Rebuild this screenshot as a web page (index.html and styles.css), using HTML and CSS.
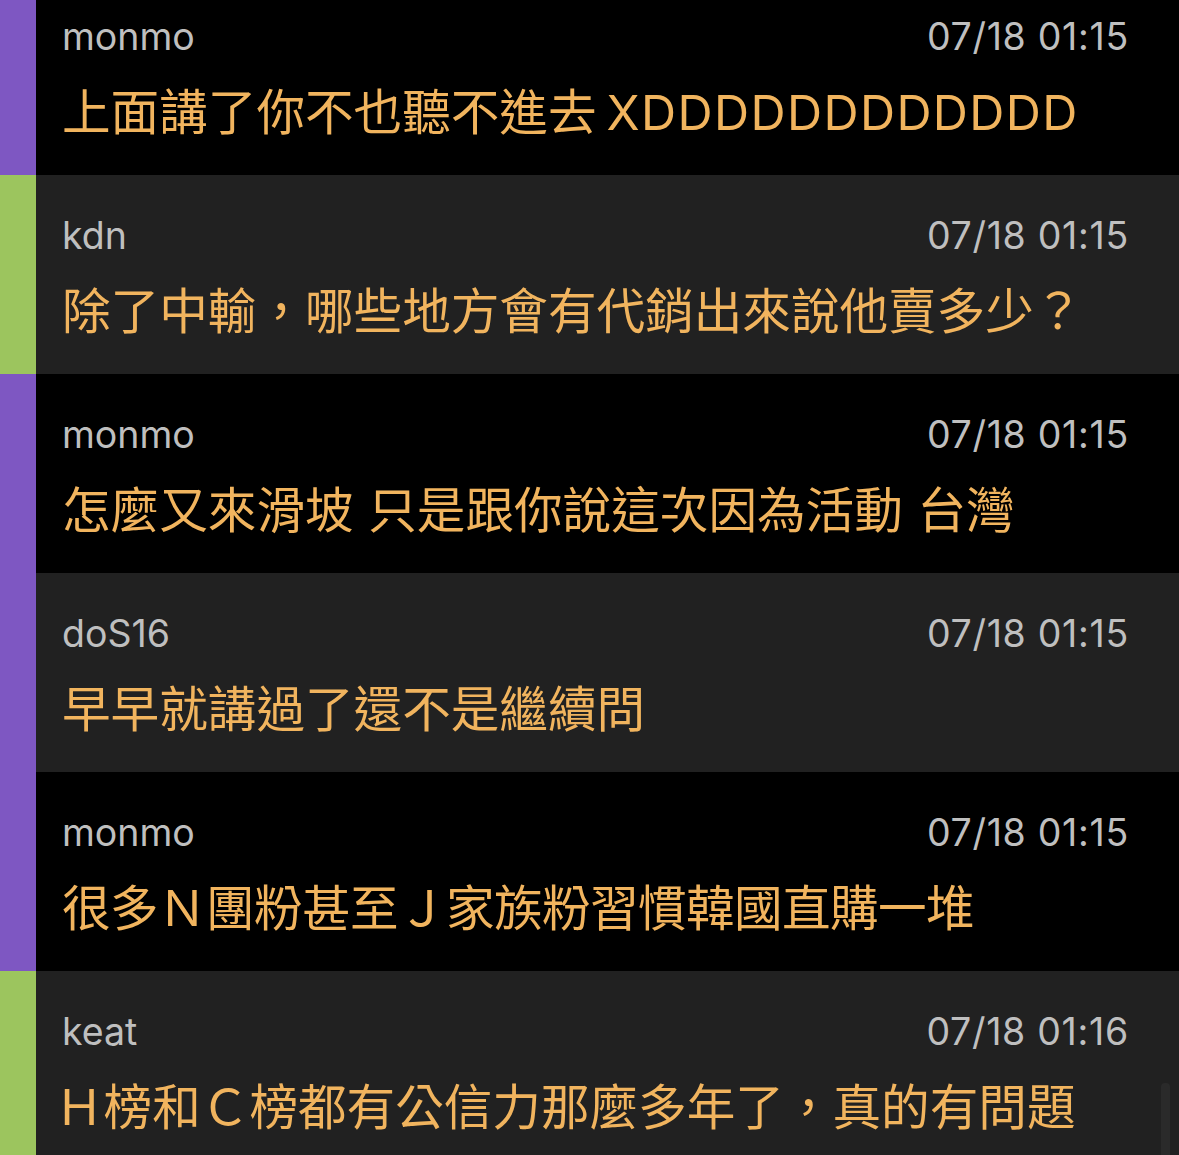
FILE: index.html
```html
<!DOCTYPE html>
<html lang="zh-Hant">
<head>
<meta charset="utf-8">
<title>Comments</title>
<link rel="stylesheet" href="styles.css">
</head>
<body>
<div class="list">
  <div class="row row-black">
    <div class="bar bar-purple"></div>
    <div class="content">
      <div class="meta"><span class="user">monmo</span><span class="time">07/18 01:15</span></div>
      <div class="msg">上面講了你不也聽不進去<span class="latin">XDDDDDDDDDDDD</span></div>
    </div>
  </div>
  <div class="row row-dark">
    <div class="bar bar-green"></div>
    <div class="content">
      <div class="meta"><span class="user">kdn</span><span class="time">07/18 01:15</span></div>
      <div class="msg">除了中輸，哪些地方會有代銷出來說他賣多少？</div>
    </div>
  </div>
  <div class="row row-black">
    <div class="bar bar-purple"></div>
    <div class="content">
      <div class="meta"><span class="user">monmo</span><span class="time">07/18 01:15</span></div>
      <div class="msg msg-spaced">怎麼又來滑坡 只是跟你說這次因為活動 台灣</div>
    </div>
  </div>
  <div class="row row-dark">
    <div class="bar bar-purple"></div>
    <div class="content">
      <div class="meta"><span class="user">doS16</span><span class="time">07/18 01:15</span></div>
      <div class="msg">早早就講過了還不是繼續問</div>
    </div>
  </div>
  <div class="row row-black">
    <div class="bar bar-purple"></div>
    <div class="content">
      <div class="meta"><span class="user">monmo</span><span class="time">07/18 01:15</span></div>
      <div class="msg msg-condensed">很多Ｎ團粉甚至Ｊ家族粉習慣韓國直購一堆</div>
    </div>
  </div>
  <div class="row row-dark">
    <div class="bar bar-green"></div>
    <div class="content">
      <div class="meta"><span class="user">keat</span><span class="time">07/18 01:16</span></div>
      <div class="msg msg-tight">Ｈ榜和Ｃ榜都有公信力那麼多年了，真的有問題</div>
    </div>
  </div>
</div>
<div class="scrollbar"></div>
</body>
</html>
```

FILE: styles.css
```css
html, body {
  margin: 0;
  padding: 0;
  background: #000;
  overflow: hidden;
}
body {
  width: 1179px;
  height: 1155px;
  position: relative;
  font-family: Inter, "Noto Sans CJK TC", sans-serif;
}
.list {
  margin-top: -24px;
  display: flex;
  flex-direction: column;
}
.row {
  display: flex;
  height: 199px;
  box-sizing: border-box;
}
.row-black { background: #000; }
.row-dark { background: #212121; }
.bar {
  width: 36px;
  flex: none;
}
.bar-purple { background: #7e57c2; }
.bar-green { background: #9cc55e; }
.content {
  flex: 1;
  padding: 38px 51px 0 26px;
  display: flex;
  flex-direction: column;
}
.meta {
  display: flex;
  justify-content: space-between;
  align-items: center;
  height: 46px;
  font-size: 37.5px;
  line-height: 46px;
  color: #bfbfbf;
}
.time {
  letter-spacing: 0.7px;
  margin-right: -1px;
}
.msg {
  margin-top: 21px;
  font-size: 48.6px;
  line-height: 64px;
  color: #f1b45e;
  white-space: nowrap;
}
.latin {
  margin-left: 10px;
  letter-spacing: 1.4px;
}
.msg-spaced {
  word-spacing: 1px;
}
.msg-condensed {
  letter-spacing: -0.6px;
}
.msg-tight {
  margin-left: -7px;
}
.scrollbar {
  position: absolute;
  right: 9px;
  top: 1083px;
  width: 9px;
  height: 80px;
  border-radius: 4px;
  background: #2a2a2a;
}
```
